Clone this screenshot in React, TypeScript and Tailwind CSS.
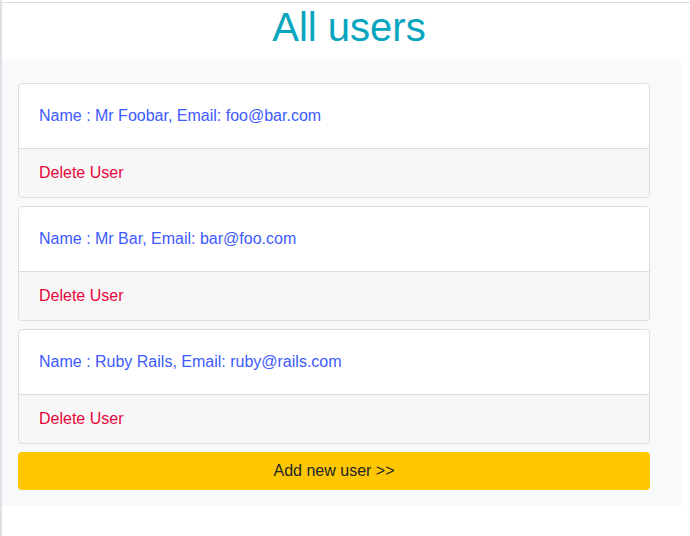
const users = [
  { name: 'Mr Foobar', email: 'foo@bar.com' },
  { name: 'Mr Bar', email: 'bar@foo.com' },
  { name: 'Ruby Rails', email: 'ruby@rails.com' },
];

const UserCard = ({ name, email }: { name: string; email: string }) => (
  <div className="mb-2 rounded-[4px] border border-[#dcdcdc] bg-white">
    <div className="px-5 py-5 leading-6 text-[#3d5afe]">
      Name : {name}, Email: {email}
    </div>
    <div className="rounded-b-[4px] border-t border-[#dcdcdc] bg-[#f7f7f7] px-5 py-3 leading-6 text-[#e8063c]">
      Delete User
    </div>
  </div>
);

const App = () => {
  return (
    <div
      className="min-h-[536px] border-l-2 border-[#dfe0e6] bg-white pt-[2px] text-base"
      style={{ fontFamily: '"Liberation Sans", Arial, sans-serif' }}
    >
      <div className="border-t border-[#dcdcdc]">
        <h1 className="mb-2 pl-[6px] text-center text-[40px] leading-[48px] text-[#08a6be]">
          All users
        </h1>
        <div className="w-[679px] bg-[#f8f9fa] pb-4 pl-4 pr-[31px] pt-6">
          {users.map(user => (
            <UserCard key={user.email} name={user.name} email={user.email} />
          ))}
          <button
            type="button"
            className="h-[38px] w-full rounded-[4px] bg-[#ffc700] leading-6 text-[#212529]"
          >
            Add new user &gt;&gt;
          </button>
        </div>
      </div>
    </div>
  );
};

export default App;
